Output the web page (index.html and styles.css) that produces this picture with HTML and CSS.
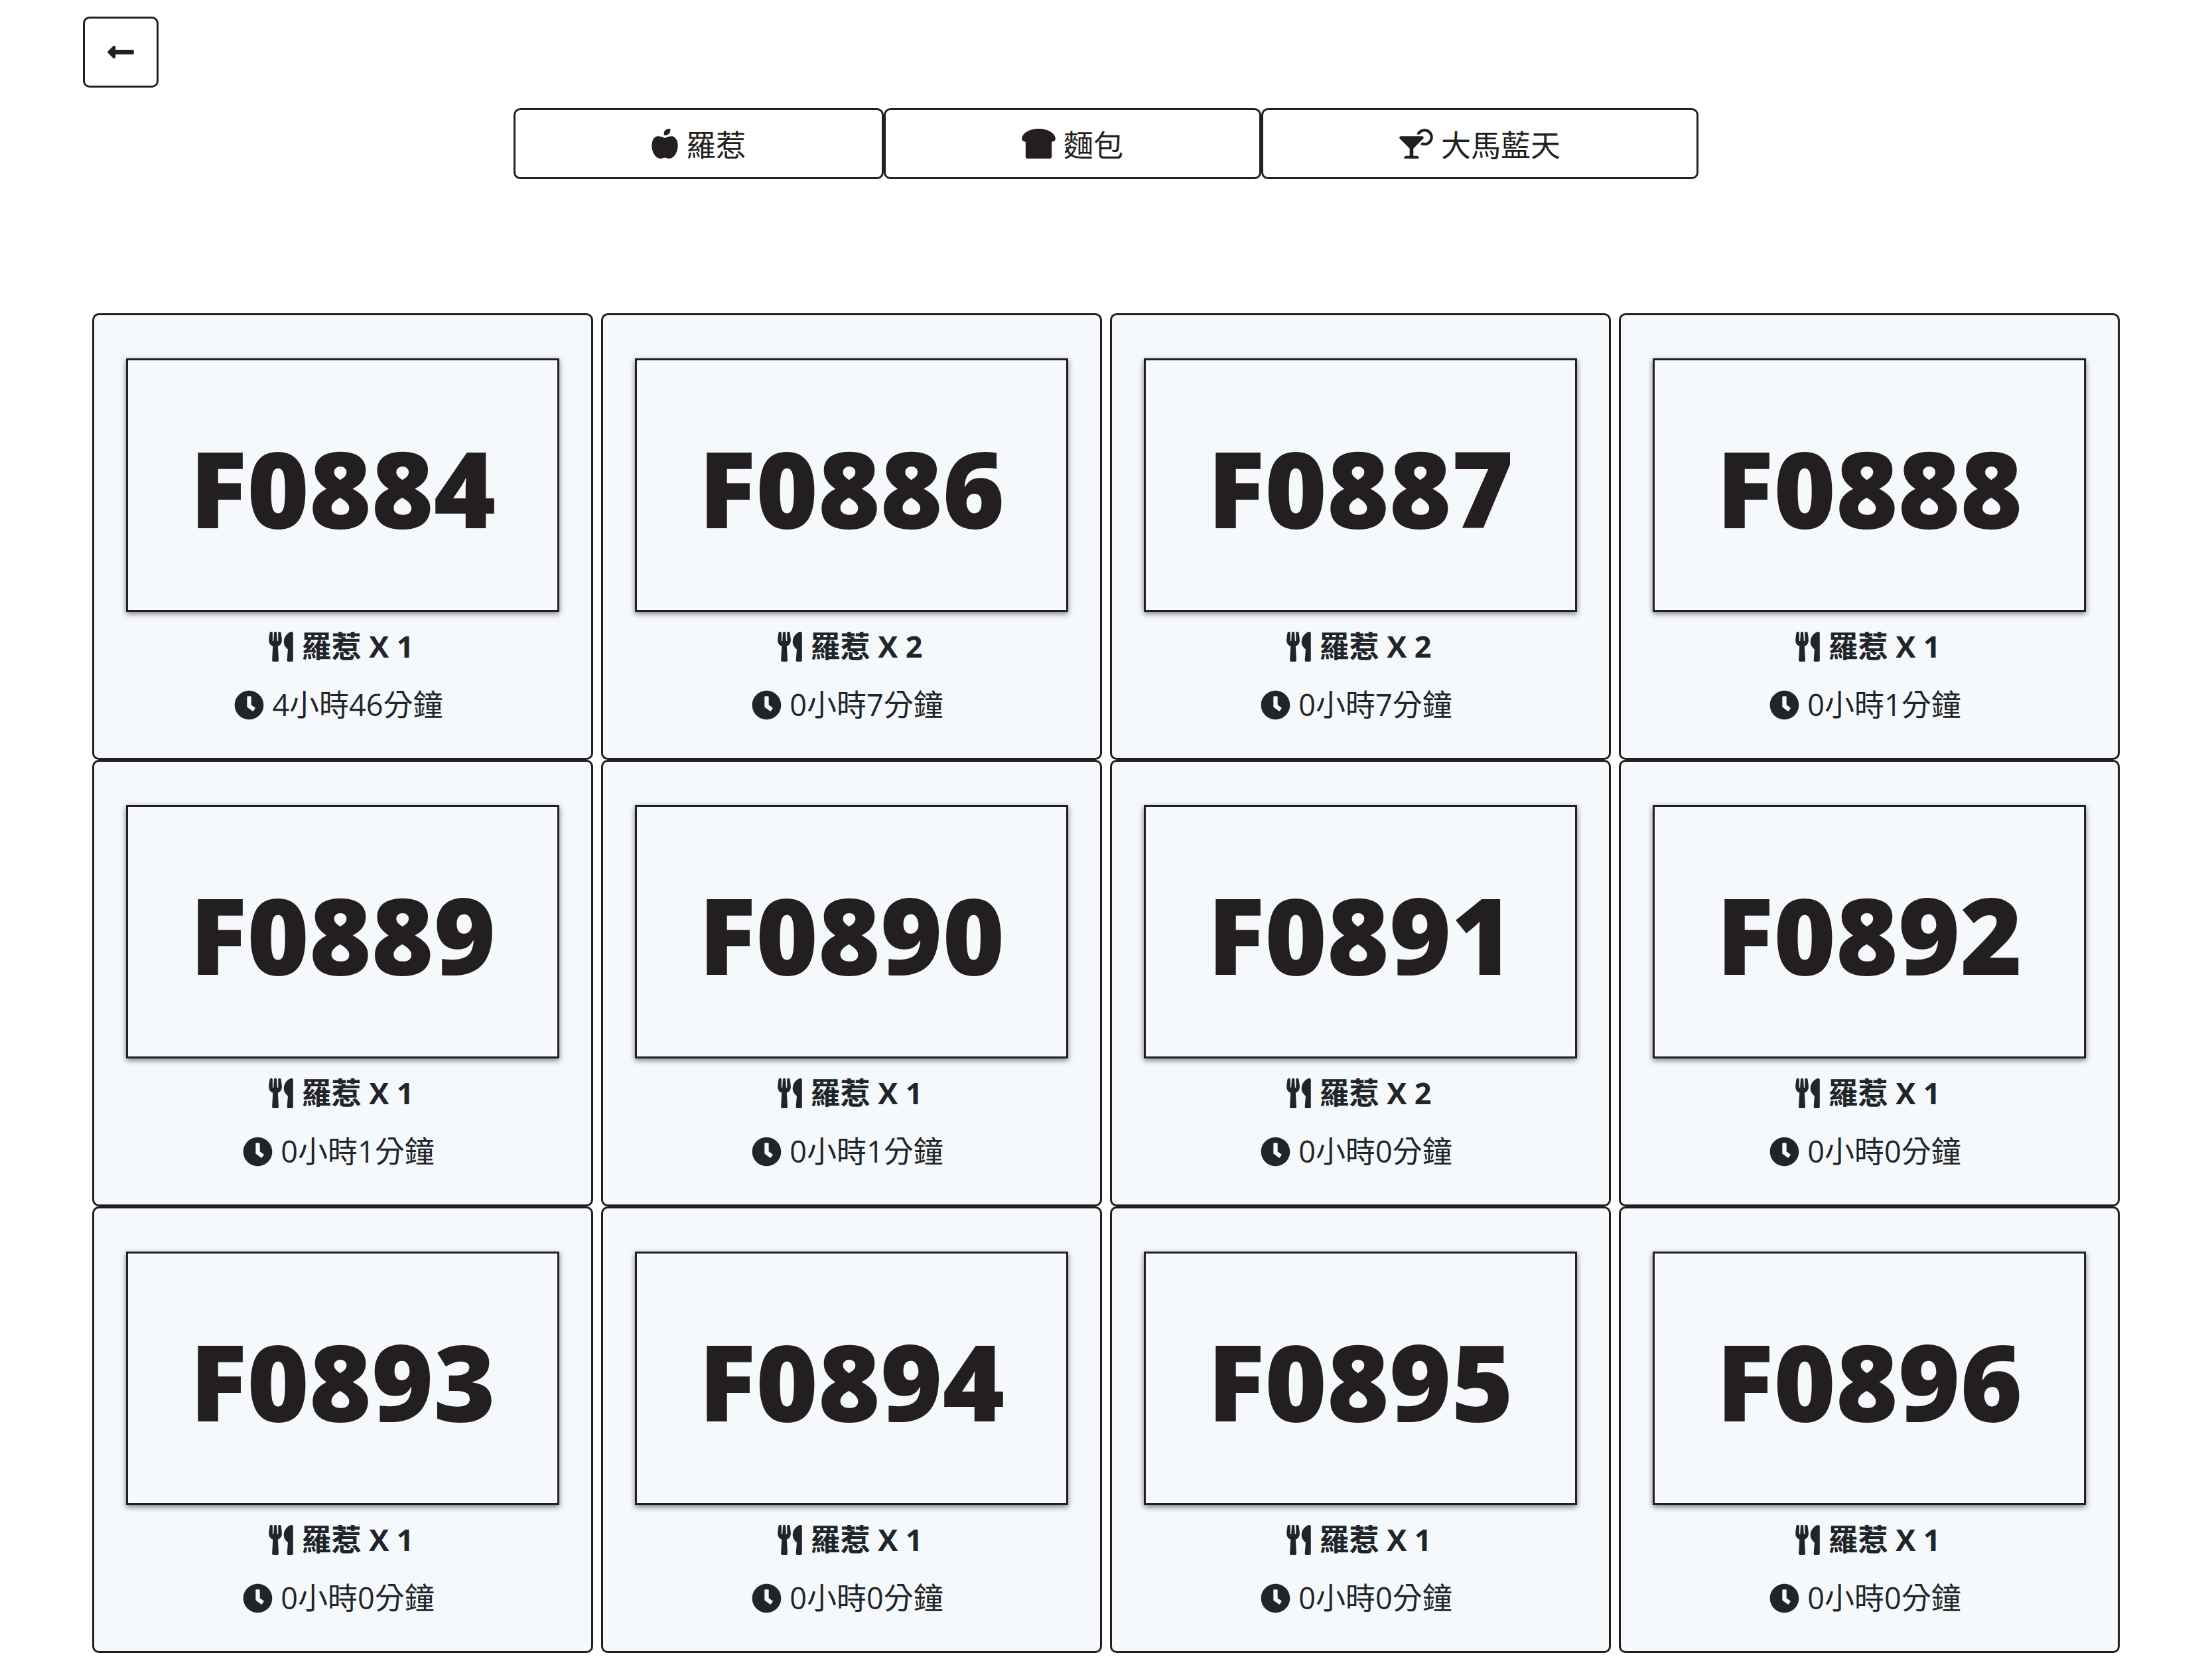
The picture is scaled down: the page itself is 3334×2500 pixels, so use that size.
FILE: index.html
```html
<!DOCTYPE html>
<html lang="zh-Hant">
<head>
<meta charset="utf-8">
<meta name="viewport" content="width=device-width, initial-scale=1">
<title>訂單</title>
<link rel="stylesheet" href="styles.css">
</head>
<body>
<svg class="sprite" aria-hidden="true">
  <symbol id="arrow" viewBox="0 0 448 512"><path d="M134.059 296H436c6.627 0 12-5.373 12-12v-56c0-6.627-5.373-12-12-12H134.059v-46.059c0-21.382-25.851-32.09-40.971-16.971L7.029 239.029c-9.373 9.373-9.373 24.569 0 33.941l86.059 86.059c15.119 15.119 40.971 4.411 40.971-16.971V296z"/></symbol>
  <symbol id="apple" viewBox="0 0 448 512"><path d="M350.85 129c25.97 4.67 47.27 18.67 63.92 42 14.65 20.67 24.64 46.67 29.96 78 4.67 28.67 4.32 57.33-1 86-7.99 47.33-23.96 87-47.94 119-28.64 38.67-64.59 58-107.87 58-10.66 0-22.3-3.33-34.96-10-8.66-5.33-18.31-8-28.97-8s-20.3 2.67-28.97 8c-12.66 6.67-24.3 10-34.96 10-43.28 0-79.23-19.33-107.87-58-23.98-32-39.95-71.67-47.94-119-5.32-28.67-5.67-57.33-1-86 5.32-31.33 15.31-57.33 29.96-78 16.65-23.33 37.95-37.33 63.92-42 15.98-2.67 37.95-.33 65.92 7 23.97 6.67 44.28 14.67 60.93 24 16.65-9.33 36.96-17.33 60.93-24 27.98-7.33 49.96-9.67 65.94-7zm-54.94-41c-9.32 8.67-21.65 15-36.96 19-10.66 3.33-22.3 5-34.96 5l-14.98-1c-1.33-9.33-1.33-20 0-32 2.67-24 10.32-42.33 22.97-55 9.32-8.67 21.65-15 36.96-19 10.66-3.33 22.3-5 34.96-5l14.98 1 1 15c0 12.67-1.67 24.33-4.99 35-3.99 15.33-10.31 27.67-18.98 37z"/></symbol>
  <symbol id="bread" viewBox="0 0 576 512"><path d="M288 0C108 0 0 93.4 0 169.14 0 199.44 24.24 224 64 224v256c0 17.67 16.12 32 36 32h376c19.88 0 36-14.33 36-32V224c39.76 0 64-24.56 64-54.86C576 93.4 468 0 288 0z"/></symbol>
  <symbol id="cocktail" viewBox="0 0 576 512"><path d="M296 464h-56V338.78l168.74-168.73c15.52-15.52 4.53-42.05-17.42-42.05H24.68c-21.95 0-32.94 26.53-17.42 42.05L176 338.78V464h-56c-22.09 0-40 17.91-40 40 0 4.42 3.58 8 8 8h240c4.42 0 8-3.58 8-8 0-22.09-17.91-40-40-40zM432 0c-62.61 0-115.35 40.2-135.18 96h52.54c16.65-28.55 47.27-48 82.64-48 52.93 0 96 43.06 96 96s-43.07 96-96 96c-14.04 0-27.29-3.2-39.32-8.64l-35.26 35.26C379.23 279.92 404.59 288 432 288c79.53 0 144-64.47 144-144S511.53 0 432 0z"/></symbol>
  <symbol id="utensils" viewBox="0 0 416 512"><path d="M207.9 15.2c.8 4.7 16.1 94.5 16.1 128.8 0 52.3-27.8 89.6-68.9 104.6L168 486.7c.7 13.7-10.2 25.3-24 25.3H80c-13.7 0-24.7-11.5-24-25.3l12.9-238.1C27.7 233.6 0 196.2 0 144 0 109.6 15.3 19.9 16.1 15.2 19.3-5.1 61.4-5.4 64 16.3v141.2c1.3 3.4 15.1 3.2 16 0 1.4-25.3 7.9-139.2 8-141.8 3.3-20.8 44.7-20.8 47.9 0 .2 2.7 6.6 116.5 8 141.8.9 3.2 14.8 3.4 16 0V16.3c2.6-21.6 44.8-21.4 48-1.1zm119.2 285.7l-15 185.1c-1.2 14 9.9 26 23.9 26h56c13.3 0 24-10.7 24-24V24c0-13.2-10.7-24-24-24-82.5 0-221.4 178.5-64.9 300.9z"/></symbol>
  <symbol id="clock" viewBox="0 0 512 512"><path d="M256 8C119 8 8 119 8 256s111 248 248 248 248-111 248-248S393 8 256 8zm57.1 350.1L224.9 294c-3.1-2.3-4.9-5.9-4.9-9.7V116c0-6.6 5.4-12 12-12h48c6.6 0 12 5.4 12 12v137.7l63.5 46.2c5.4 3.9 6.5 11.4 2.6 16.8l-28.2 38.8c-3.9 5.3-11.4 6.5-16.8 2.6z"/></symbol>
</svg>
<header class="topbar">
  <button class="btn btn-back" type="button" aria-label="返回"><svg class="icon icon-mid"><use href="#arrow"/></svg></button>
</header>
<nav class="tabs">
  <button class="btn btn-tab" type="button"><svg class="icon icon-mid"><use href="#apple"/></svg><span>羅惹</span></button>
  <button class="btn btn-tab" type="button"><svg class="icon icon-wide"><use href="#bread"/></svg><span>麵包</span></button>
  <button class="btn btn-tab" type="button"><svg class="icon icon-wide"><use href="#cocktail"/></svg><span>大馬藍天</span></button>
</nav>
<main class="orders">
  <article class="card"><h2 class="number">F0884</h2><p class="line item"><svg class="icon icon-slim"><use href="#utensils"/></svg><span>羅惹 X 1</span></p><p class="line time"><svg class="icon icon-square"><use href="#clock"/></svg><span>4小時46分鐘</span></p></article>
  <article class="card"><h2 class="number">F0886</h2><p class="line item"><svg class="icon icon-slim"><use href="#utensils"/></svg><span>羅惹 X 2</span></p><p class="line time"><svg class="icon icon-square"><use href="#clock"/></svg><span>0小時7分鐘</span></p></article>
  <article class="card"><h2 class="number">F0887</h2><p class="line item"><svg class="icon icon-slim"><use href="#utensils"/></svg><span>羅惹 X 2</span></p><p class="line time"><svg class="icon icon-square"><use href="#clock"/></svg><span>0小時7分鐘</span></p></article>
  <article class="card"><h2 class="number">F0888</h2><p class="line item"><svg class="icon icon-slim"><use href="#utensils"/></svg><span>羅惹 X 1</span></p><p class="line time"><svg class="icon icon-square"><use href="#clock"/></svg><span>0小時1分鐘</span></p></article>
  <article class="card"><h2 class="number">F0889</h2><p class="line item"><svg class="icon icon-slim"><use href="#utensils"/></svg><span>羅惹 X 1</span></p><p class="line time"><svg class="icon icon-square"><use href="#clock"/></svg><span>0小時1分鐘</span></p></article>
  <article class="card"><h2 class="number">F0890</h2><p class="line item"><svg class="icon icon-slim"><use href="#utensils"/></svg><span>羅惹 X 1</span></p><p class="line time"><svg class="icon icon-square"><use href="#clock"/></svg><span>0小時1分鐘</span></p></article>
  <article class="card"><h2 class="number">F0891</h2><p class="line item"><svg class="icon icon-slim"><use href="#utensils"/></svg><span>羅惹 X 2</span></p><p class="line time"><svg class="icon icon-square"><use href="#clock"/></svg><span>0小時0分鐘</span></p></article>
  <article class="card"><h2 class="number">F0892</h2><p class="line item"><svg class="icon icon-slim"><use href="#utensils"/></svg><span>羅惹 X 1</span></p><p class="line time"><svg class="icon icon-square"><use href="#clock"/></svg><span>0小時0分鐘</span></p></article>
  <article class="card"><h2 class="number">F0893</h2><p class="line item"><svg class="icon icon-slim"><use href="#utensils"/></svg><span>羅惹 X 1</span></p><p class="line time"><svg class="icon icon-square"><use href="#clock"/></svg><span>0小時0分鐘</span></p></article>
  <article class="card"><h2 class="number">F0894</h2><p class="line item"><svg class="icon icon-slim"><use href="#utensils"/></svg><span>羅惹 X 1</span></p><p class="line time"><svg class="icon icon-square"><use href="#clock"/></svg><span>0小時0分鐘</span></p></article>
  <article class="card"><h2 class="number">F0895</h2><p class="line item"><svg class="icon icon-slim"><use href="#utensils"/></svg><span>羅惹 X 1</span></p><p class="line time"><svg class="icon icon-square"><use href="#clock"/></svg><span>0小時0分鐘</span></p></article>
  <article class="card"><h2 class="number">F0896</h2><p class="line item"><svg class="icon icon-slim"><use href="#utensils"/></svg><span>羅惹 X 1</span></p><p class="line time"><svg class="icon icon-square"><use href="#clock"/></svg><span>0小時0分鐘</span></p></article>
</main>
</body>
</html>
```
FILE: styles.css
```css
* {
  box-sizing: border-box;
}

body {
  margin: 0;
  background: #fff;
  color: #212529;
  font-family: "Open Sans", "Noto Sans CJK TC", sans-serif;
  font-size: 45px;
  line-height: 67px;
}

.sprite {
  display: none;
}

.icon {
  flex: none;
  height: 45px;
  fill: currentColor;
}

.icon-slim { width: 37px; }
.icon-mid { width: 40px; }
.icon-square { width: 45px; }
.icon-wide { width: 51px; }

.topbar {
  display: flex;
  padding: 25px 125px 0;
}

.btn {
  display: flex;
  align-items: center;
  gap: 12px;
  border: 3px solid #231f20;
  border-radius: 10px;
  background: #fff;
  color: #231f20;
  font: inherit;
  white-space: nowrap;
}

.btn-back {
  padding: 28px 34px;
}

.btn-tab {
  padding: 17px 205px;
}

.btn-tab span {
  padding-top: 4px;
  line-height: 63px;
}

.tabs {
  display: flex;
  justify-content: center;
  padding: 31px 0 0;
}

.orders {
  display: grid;
  grid-template-columns: repeat(4, 1fr);
  column-gap: 12px;
  padding: 202px 139px 8px;
}

.card {
  padding: 65px 48px 36px;
  border: 3px solid #231f20;
  border-radius: 10px;
  background: #f6f9fc;
}

.number {
  margin: 0 0 8px;
  padding: 83px 0 77px;
  border: 3px solid #231f20;
  box-shadow: 0 3px 8px rgba(0, 0, 0, 0.5), inset 0 0 4px #fff;
  color: #231f20;
  font-size: 160px;
  font-weight: 800;
  line-height: 216px;
  text-align: center;
}

.line {
  display: flex;
  justify-content: center;
  align-items: center;
  gap: 12px;
  margin: 0;
  line-height: 88px;
}

.item {
  padding-right: 4px;
  font-weight: 700;
}

.time {
  padding-right: 12px;
  font-weight: 400;
}
```
